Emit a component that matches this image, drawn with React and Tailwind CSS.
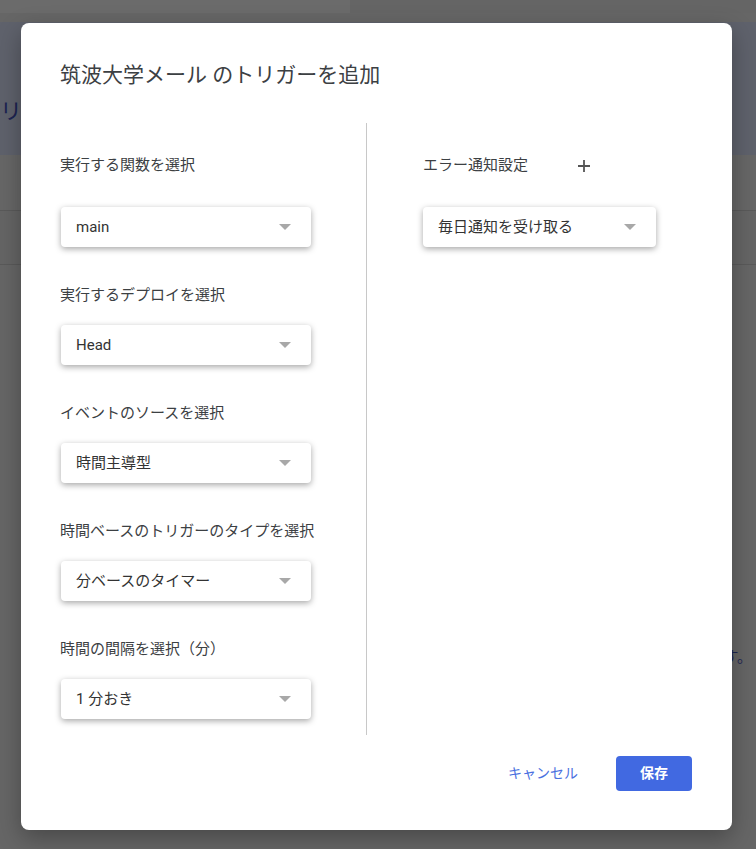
const font = { fontFamily: 'Roboto, "Noto Sans CJK JP", sans-serif' }

const Select = ({ value, width = 'w-[250px]' }) => (
  <div
    className={`${width} h-[40px] flex items-center justify-between pl-[15px] pr-[20px] bg-white rounded-[4px] shadow-[0_2px_6px_rgba(0,0,0,0.35)] text-[15px] leading-[20px] text-[#333]`}
  >
    <span>{value}</span>
    <svg width="12" height="6" viewBox="0 0 12 6">
      <path d="M0 0 L12 0 L6 6 Z" fill="#a8a8a8" />
    </svg>
  </div>
)

const Field = ({ label, value, first }) => (
  <div className={first ? 'flex flex-col' : 'flex flex-col mt-[38px]'}>
    <div className="h-[20px] -ml-[1px] text-[15px] leading-[20px] text-[#3c4043]">{label}</div>
    <div className={first ? 'mt-[32px]' : 'mt-[20px]'}>
      <Select value={value} />
    </div>
  </div>
)

const App = () => {
  return (
    <div className="relative w-full h-[849px] overflow-hidden bg-[#666666]" style={font}>
      {/* dimmed page behind the dialog */}
      <div className="flex h-[13px]">
        <div className="w-[350px] bg-[#6b6b6b]" />
        <div className="flex-1 bg-[#656565]" />
      </div>
      <div className="h-[9px]" />
      <div className="h-[133px] bg-[#5f626c] pt-[76px] text-[22px] leading-[28px] text-[#1c2452] whitespace-nowrap">
        <span>リガー</span>
      </div>
      <div className="h-[56px] border-b border-[#5a5a5a] bg-[#676767]" />
      <div className="h-[54px] border-b border-[#5a5a5a] bg-[#656565]" />
      <div className="flex justify-end pt-[382px] pr-[4px] text-[15px] leading-[20px] text-[#1c2452] whitespace-nowrap">
        <span>す。</span>
      </div>

      {/* dialog */}
      <div className="absolute left-[21px] top-[23px] w-[711px] h-[807px] bg-white rounded-[8px] shadow-[0_8px_24px_rgba(0,0,0,0.3)] flex flex-col">
        <div className="pl-[39px] pt-[39px] h-[100px] text-[21px] leading-[26px] text-[#3c4043]">
          筑波大学メール のトリガーを追加
        </div>
        <div className="flex pl-[40px]">
          <div className="w-[306px] pt-[32px] pb-[16px] border-r border-[#c8c8c8]">
            <Field first label="実行する関数を選択" value="main" />
            <Field label="実行するデプロイを選択" value="Head" />
            <Field label="イベントのソースを選択" value="時間主導型" />
            <Field label="時間ベースのトリガーのタイプを選択" value="分ベースのタイマー" />
            <Field label="時間の間隔を選択（分）" value="1 分おき" />
          </div>
          <div className="pl-[56px] pt-[32px]">
            <div className="flex items-center h-[20px]">
              <span className="text-[15px] leading-[20px] text-[#3c4043]">エラー通知設定</span>
              <svg className="ml-[50px] mt-[2px]" width="12" height="12" viewBox="0 0 12 12">
                <path d="M6 0 V12 M0 6 H12" stroke="#555" strokeWidth="1.8" />
              </svg>
            </div>
            <div className="mt-[32px]">
              <Select value="毎日通知を受け取る" width="w-[233px]" />
            </div>
          </div>
        </div>
        <div className="flex justify-end items-center gap-[22px] pr-[40px] mt-[21px]">
          <button className="h-[35px] px-[16px] text-[14px] text-[#4a70e0]">キャンセル</button>
          <button className="h-[35px] w-[76px] rounded-[4px] bg-[#4169e1] text-white text-[14px] font-bold">
            保存
          </button>
        </div>
      </div>
    </div>
  )
}

export default App
